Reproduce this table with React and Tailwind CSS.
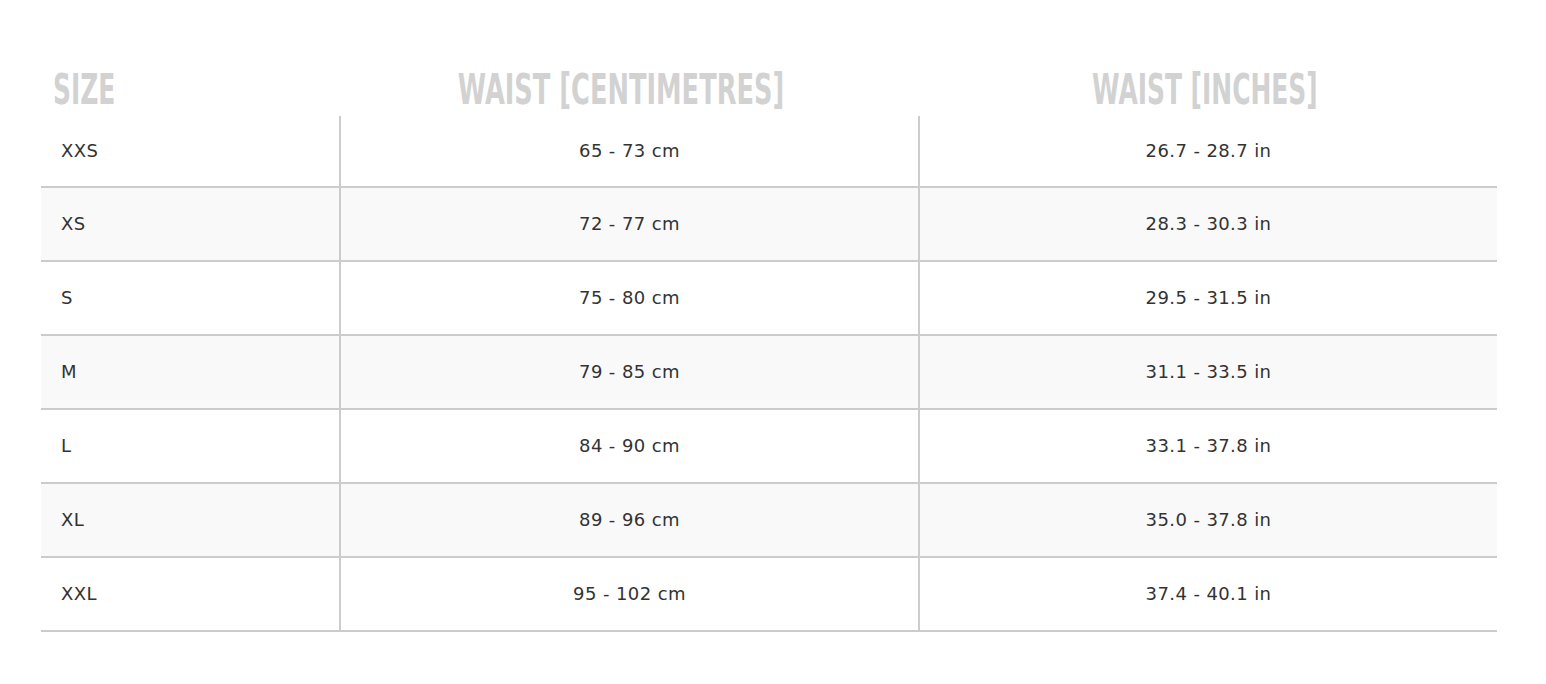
import React from "react";

const rows = [
  ["XXS", "65 - 73 cm", "26.7 - 28.7 in"],
  ["XS", "72 - 77 cm", "28.3 - 30.3 in"],
  ["S", "75 - 80 cm", "29.5 - 31.5 in"],
  ["M", "79 - 85 cm", "31.1 - 33.5 in"],
  ["L", "84 - 90 cm", "33.1 - 37.8 in"],
  ["XL", "89 - 96 cm", "35.0 - 37.8 in"],
  ["XXL", "95 - 102 cm", "37.4 - 40.1 in"],
];

const headFont = { fontFamily: '"DejaVu Sans Condensed", "Liberation Sans", sans-serif' };

function App() {
  return (
    <div className="min-h-screen bg-white pt-[68px] px-[41px]" style={{ fontFamily: '"DejaVu Sans", "Noto Sans", sans-serif' }}>
      <div className="w-[1456px]">
        {/* header */}
        <div className="grid grid-cols-[298px_579px_579px] h-[48px] items-start">
          <div className="pl-[12px]">
            <span className="inline-block text-[42px] font-bold leading-[44px] text-[#d2d2d2] origin-left scale-x-[0.66]" style={headFont}>
              SIZE
            </span>
          </div>
          <div className="text-center pr-[14px]">
            <span className="inline-block text-[42px] font-bold leading-[44px] text-[#d2d2d2] scale-x-[0.68]" style={headFont}>
              WAIST [CENTIMETRES]
            </span>
          </div>
          <div className="text-center pr-[6px]">
            <span className="inline-block text-[42px] font-bold leading-[44px] text-[#d2d2d2] scale-x-[0.66]" style={headFont}>
              WAIST [INCHES]
            </span>
          </div>
        </div>

        {/* rows */}
        {rows.map((r, i) => (
          <div
            key={r[0]}
            className={
              "grid grid-cols-[298px_579px_579px] border-b-2 border-[#cccccc] text-[18px] tracking-[0.4px] text-[#333333] " +
              (i === 0 ? "h-[72px] " : "h-[74px] ") +
              (i % 2 === 1 ? "bg-[#f9f9f9]" : "bg-white")
            }
          >
            <div className="flex items-center pl-[20px] pb-[2px]">{r[0]}</div>
            <div className="flex items-center justify-center border-l-2 border-[#cccccc] pb-[2px]">{r[1]}</div>
            <div className="flex items-center justify-center border-l-2 border-[#cccccc] pb-[2px]">{r[2]}</div>
          </div>
        ))}
      </div>
    </div>
  );
}

export default App;
